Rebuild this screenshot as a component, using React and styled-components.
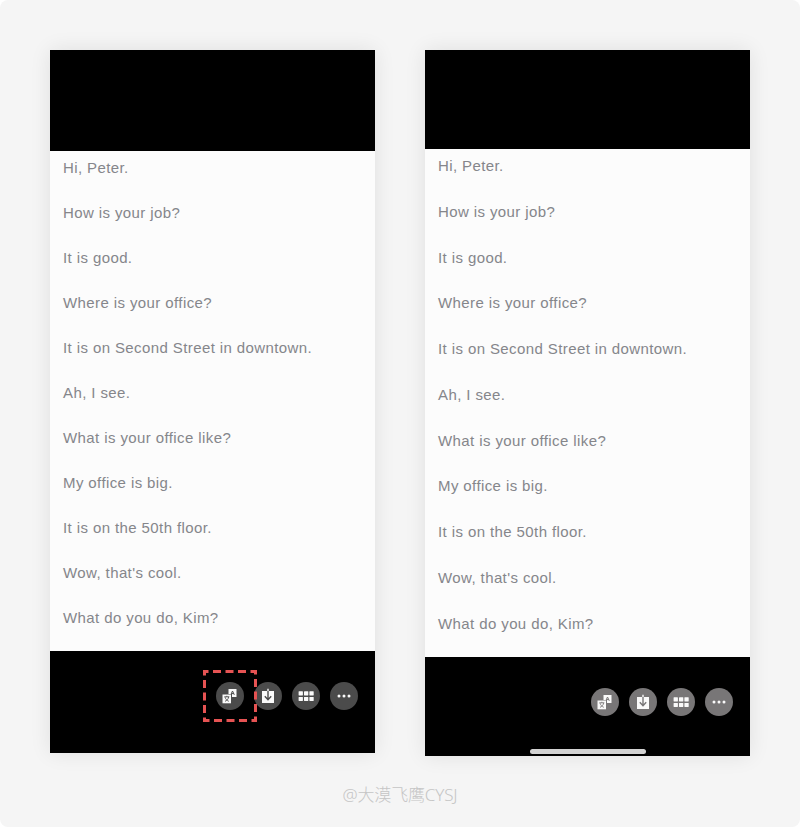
import React from 'react';
import styled, { createGlobalStyle } from 'styled-components';

const GlobalStyle = createGlobalStyle`
  * { box-sizing: border-box; }
  body { margin: 0; background: #fff; }
`;

const Page = styled.main`
  width: 800px;
  height: 827px;
  padding-top: 50px;
  background: #f5f5f5;
  border-radius: 8px;
  overflow: hidden;
  font-family: "Liberation Sans", Arial, sans-serif;
`;

const Comparison = styled.div`
  display: flex;
  align-items: flex-start;
  justify-content: center;
  gap: 50px;
  height: 706px;
`;

const Phone = styled.section`
  display: flex;
  flex-direction: column;
  width: 325px;
  background: #000;
  box-shadow: 0 0 20px rgba(0, 0, 0, 0.09);
`;

const TopBar = styled.header`
  height: ${({ $height }) => $height}px;
`;

const Document = styled.div`
  display: flex;
  flex-direction: column;
  height: ${({ $height }) => $height}px;
  padding: ${({ $top }) => $top}px 13px 0;
  background: #fcfcfc;
`;

const Sentence = styled.p`
  flex: none;
  height: ${({ $pitch }) => $pitch}px;
  margin: 0;
  font-size: 15px;
  line-height: 18px;
  letter-spacing: ${({ $tracking }) => $tracking}px;
  white-space: nowrap;
  color: #85868b;
`;

const BottomBar = styled.footer`
  display: flex;
  flex-direction: column;
  justify-content: space-between;
  align-items: center;
  height: ${({ $height }) => $height}px;
  padding: ${({ $top }) => $top}px 17.5px 2px;
`;

const Actions = styled.nav`
  display: flex;
  align-self: flex-end;
  gap: 10px;
`;

const ActionButton = styled.button`
  position: relative;
  display: flex;
  width: 28px;
  height: 28px;
  padding: 0;
  border: 0;
  border-radius: 50%;
  background: ${({ $bright }) => ($bright ? '#787677' : '#4b4b4b')};
  color: #fafafa;
`;

const Icon = styled.svg`
  display: block;
  width: 28px;
  height: 28px;
`;

const Highlight = styled.svg`
  position: absolute;
  left: -12.5px;
  top: -12px;
  width: 54px;
  height: 52px;
  z-index: 1;
  pointer-events: none;
`;

const HomeIndicator = styled.div`
  width: 116px;
  height: 5px;
  border-radius: 3px;
  background: #d2d2d2;
`;

const Credit = styled.p`
  margin: 26px 0 0;
  text-align: center;
  font-family: "Noto Sans", "Noto Sans CJK SC", sans-serif;
  font-size: 17px;
  font-weight: 300;
  line-height: 26px;
  letter-spacing: -0.15px;
  color: #c5c5c5;
`;

const TranslateIcon = ({ ink }) => (
  <Icon viewBox="0 0 28 28" fill="none">
    <path d="M12.5 7h8v8h-8z" fill="currentColor" />
    <path d="M14.8 12.8 16.5 9l1.8 3.8M15.4 11.6h2.3" stroke={ink} strokeWidth="1" />
    <path d="M6 12h10v10H6z" fill={ink} />
    <path d="M6.5 12.5h8.5v8.8H6.5z" fill="currentColor" />
    <path d="M8.3 14.8h5M10.8 13.8v1M9 19.3c2.1-.8 3.4-2.3 3.6-4.4M9.1 15.2c.4 1.9 1.8 3.3 3.7 4.1" stroke={ink} strokeWidth="0.9" />
  </Icon>
);

const DownloadIcon = ({ ink }) => (
  <Icon viewBox="0 0 28 28" fill="none">
    <path d="M8 9h12v12H8z" fill="currentColor" />
    <path d="M14 9v8.5M10.8 14.2l3.2 3.5 3.2-3.5" stroke={ink} strokeWidth="1.4" />
    <path d="M13.3 6.8h1.4V9h-1.4z" fill="currentColor" />
  </Icon>
);

const GridIcon = () => (
  <Icon viewBox="0 0 28 28" fill="currentColor">
    {[9.3, 14.9].map((y) =>
      [6.6, 12, 17.4].map((x) => <rect key={`${x}-${y}`} x={x} y={y} width="4.3" height="4.1" rx="0.4" />)
    )}
  </Icon>
);

const MoreIcon = () => (
  <Icon viewBox="0 0 28 28" fill="currentColor">
    {[9, 14, 19].map((x) => <circle key={x} cx={x} cy="14" r="1.5" />)}
  </Icon>
);

const icons = [
  ['Translate', TranslateIcon],
  ['Download', DownloadIcon],
  ['Thumbnails', GridIcon],
  ['More', MoreIcon],
];

const sentences = [
  ['Hi, Peter.', 0.4],
  ['How is your job?', 0.4],
  ['It is good.', 0.4],
  ['Where is your office?', 0.4],
  ['It is on Second Street in downtown.', 0.4],
  ['Ah, I see.', 0.4],
  ['What is your office like?', 0.4],
  ['My office is big.', 0.4],
  ['It is on the 50th floor.', 0.4],
  ["Wow, that's cool.", 0.4],
  ['What do you do, Kim?', 0.4],
];

const PhoneScreen = ({ header, body, bodyTop, pitch, footer, footerTop, bright, highlighted, home }) => (
  <Phone>
    <TopBar $height={header} />
    <Document $height={body} $top={bodyTop}>
      {sentences.map(([text, tracking]) => (
        <Sentence key={text} $pitch={pitch} $tracking={tracking}>{text}</Sentence>
      ))}
    </Document>
    <BottomBar $height={footer} $top={footerTop}>
      <Actions>
        {icons.map(([label, Glyph], index) => (
          <ActionButton key={label} aria-label={label} $bright={bright}>
            <Glyph ink={bright ? '#787677' : '#4b4b4b'} />
            {highlighted && index === 0 && (
              <Highlight viewBox="0 0 54 52" fill="none">
                <rect x="1.5" y="1.5" width="51" height="49" stroke="#e65353" strokeWidth="3" strokeDasharray="8 4.5" strokeDashoffset="4" />
              </Highlight>
            )}
          </ActionButton>
        ))}
      </Actions>
      {home && <HomeIndicator />}
    </BottomBar>
  </Phone>
);

export default function App() {
  return (
    <>
      <GlobalStyle />
      <Page>
        <Comparison>
          <PhoneScreen header={101} body={500} bodyTop={8} pitch={45} footer={102} footerTop={31} highlighted />
          <PhoneScreen header={99} body={508} bodyTop={8} pitch={45.75} footer={99} footerTop={31} bright home />
        </Comparison>
        <Credit>@大漠飞鹰CYSJ</Credit>
      </Page>
    </>
  );
}
